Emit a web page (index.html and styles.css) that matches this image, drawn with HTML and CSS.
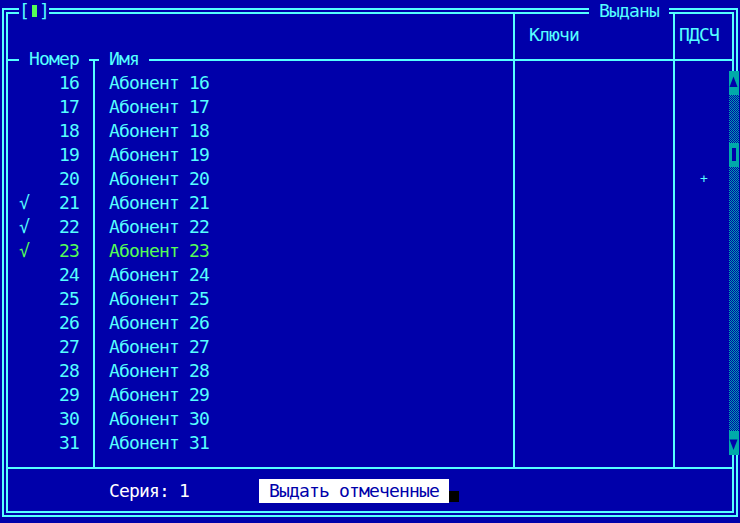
FILE: index.html
```html
<!DOCTYPE html>
<html lang="ru">
<head>
    <meta charset="UTF-8">
    <meta name="viewport" content="width=device-width, initial-scale=1.0">
    <title>Выданы</title>
    <link rel="stylesheet" href="styles.css">
</head>
<body>
    <div class="screen">
        <div class="frame"></div>
        <div class="vline v-id"></div>
        <div class="vline v-keys"></div>
        <div class="vline v-rng"></div>
        <div class="hline h-head"></div>
        <div class="hline h-foot"></div>

        <div class="close"><span>[</span><span class="close-cell"><i class="close-mark"></i></span><span>]</span></div>
        <div class="label title">Выданы</div>
        <div class="label col-num">Номер</div>
        <div class="label col-name">Имя</div>
        <div class="head col-keys">Ключи</div>
        <div class="head col-rng">ПДСЧ</div>

        <div class="list">
            <div class="row"><span class="mark"></span><span class="num">16</span><span class="name">Абонент 16</span></div>
            <div class="row"><span class="mark"></span><span class="num">17</span><span class="name">Абонент 17</span></div>
            <div class="row"><span class="mark"></span><span class="num">18</span><span class="name">Абонент 18</span></div>
            <div class="row"><span class="mark"></span><span class="num">19</span><span class="name">Абонент 19</span></div>
            <div class="row"><span class="mark"></span><span class="num">20</span><span class="name">Абонент 20</span></div>
            <div class="row"><span class="mark">√</span><span class="num">21</span><span class="name">Абонент 21</span></div>
            <div class="row"><span class="mark">√</span><span class="num">22</span><span class="name">Абонент 22</span></div>
            <div class="row current"><span class="mark">√</span><span class="num">23</span><span class="name">Абонент 23</span></div>
            <div class="row"><span class="mark"></span><span class="num">24</span><span class="name">Абонент 24</span></div>
            <div class="row"><span class="mark"></span><span class="num">25</span><span class="name">Абонент 25</span></div>
            <div class="row"><span class="mark"></span><span class="num">26</span><span class="name">Абонент 26</span></div>
            <div class="row"><span class="mark"></span><span class="num">27</span><span class="name">Абонент 27</span></div>
            <div class="row"><span class="mark"></span><span class="num">28</span><span class="name">Абонент 28</span></div>
            <div class="row"><span class="mark"></span><span class="num">29</span><span class="name">Абонент 29</span></div>
            <div class="row"><span class="mark"></span><span class="num">30</span><span class="name">Абонент 30</span></div>
            <div class="row"><span class="mark"></span><span class="num">31</span><span class="name">Абонент 31</span></div>
        </div>

        <div class="plus">+</div>

        <div class="scrollbar">
            <div class="sb-btn"><svg width="10" height="24" viewBox="0 0 10 24"><rect width="10" height="24" fill="#00aaaa"/><polygon points="4.5,5.5 8.5,16 0.5,16" fill="#0000aa"/></svg></div>
            <div class="sb-track sb-track-top"></div>
            <div class="sb-thumb"><svg width="10" height="24" viewBox="0 0 10 24"><rect width="10" height="24" fill="#00aaaa"/><rect x="3" y="5" width="4" height="13" fill="#0000aa"/></svg></div>
            <div class="sb-track sb-track-rest"></div>
            <div class="sb-btn"><svg width="10" height="24" viewBox="0 0 10 24"><rect width="10" height="24" fill="#00aaaa"/><polygon points="0.5,8.5 8.5,8.5 4.5,19" fill="#0000aa"/></svg></div>
        </div>

        <div class="series">Серия: 1</div>
        <div class="btn">Выдать отмеченные</div>
        <div class="cursor"></div>
    </div>
</body>
</html>
```

FILE: styles.css
```css
html, body {
    margin: 0;
    padding: 0;
    overflow: hidden;
    background-color: #0000aa;
}
.screen {
    display: grid;
    grid-template-columns: 9px repeat(73, 10px);
    grid-template-rows: 23px repeat(20, 24px) 20px;
    font-family: "DejaVu Sans Mono", monospace;
    font-size: 18px;
    letter-spacing: -0.84px;
    line-height: 24px;
    color: #55ffff;
    white-space: nowrap;
}

/* double frame */
.frame {
    grid-column: 1 / -1;
    grid-row: 1 / -1;
    margin: 8px 1px 6px 2px;
    border: 2px solid #55ffff;
    padding: 2px;
}
.frame::before {
    content: '';
    display: block;
    height: 100%;
    border: 2px solid #55ffff;
    box-sizing: border-box;
}

/* single lines */
.vline {
    justify-self: center;
    width: 2px;
    background-color: #55ffff;
    margin-bottom: 10px;
}
.v-id {
    grid-column: 10;
    grid-row: 3 / 21;
    margin-top: 12px;
}
.v-keys {
    grid-column: 52;
    grid-row: 1 / 21;
    margin-top: 12px;
}
.v-rng {
    grid-column: 68;
    grid-row: 1 / 21;
    margin-top: 12px;
}
.hline {
    grid-column: 1 / -1;
    align-self: start;
    height: 2px;
    margin: 12px 5px 0 6px;
    background-color: #55ffff;
}
.h-head {
    grid-row: 3;
}
.h-foot {
    grid-row: 20;
}

/* labels sitting on the lines */
.label {
    background-color: #0000aa;
    padding: 0 10px;
}
.title {
    grid-column: 60 / 68;
    grid-row: 1;
    margin-top: -1px;
}
.col-num {
    grid-column: 3 / 10;
    grid-row: 3;
}
.col-name {
    grid-column: 11 / 16;
    grid-row: 3;
}
.close {
    grid-column: 3 / 6;
    grid-row: 1;
    margin-top: -1px;
    display: flex;
    background-color: #0000aa;
}
.close span {
    width: 10px;
    text-align: center;
}
.close-cell {
    display: flex;
    justify-content: center;
    align-items: flex-start;
}
.close-mark {
    display: block;
    width: 5px;
    height: 12px;
    margin-top: 6px;
    background-color: #55ff55;
}
.col-keys {
    grid-column: 54 / span 5;
    grid-row: 2;
}
.col-rng {
    grid-column: 69 / span 4;
    grid-row: 2;
}

/* list */
.list {
    grid-column: 3 / 52;
    grid-row: 4 / 20;
    display: flex;
    flex-direction: column;
}
.row {
    display: grid;
    grid-template-columns: 10px 50px 30px 1fr;
    height: 24px;
}
.mark {
    text-align: center;
}
.num {
    text-align: right;
}
.name {
    grid-column: 4;
}
.row.current {
    color: #55ff55;
}

.plus {
    grid-column: 71;
    grid-row: 8;
    font-size: 13px;
    letter-spacing: 0;
    text-align: center;
}

/* scrollbar */
.scrollbar {
    grid-column: 74;
    grid-row: 4 / 20;
    display: flex;
    flex-direction: column;
}
.sb-btn,
.sb-thumb {
    flex: none;
    height: 24px;
}
.scrollbar svg {
    display: block;
}
.sb-track {
    background: repeating-conic-gradient(#00aaaa 0 25%, #0000aa 0 50%) 0 0 / 2px 2px;
}
.sb-track-top {
    flex: none;
    height: 48px;
}
.sb-track-rest {
    flex: 1;
}

/* footer */
.series {
    grid-column: 12 / span 8;
    grid-row: 21;
    color: #ffffff;
}
.btn {
    grid-column: 27 / 46;
    grid-row: 21;
    padding: 0 10px;
    background-color: #ffffff;
    color: #0000aa;
}
.cursor {
    grid-column: 46;
    grid-row: 21;
    align-self: end;
    height: 11px;
    margin-bottom: 1px;
    background-color: #000000;
}
```
